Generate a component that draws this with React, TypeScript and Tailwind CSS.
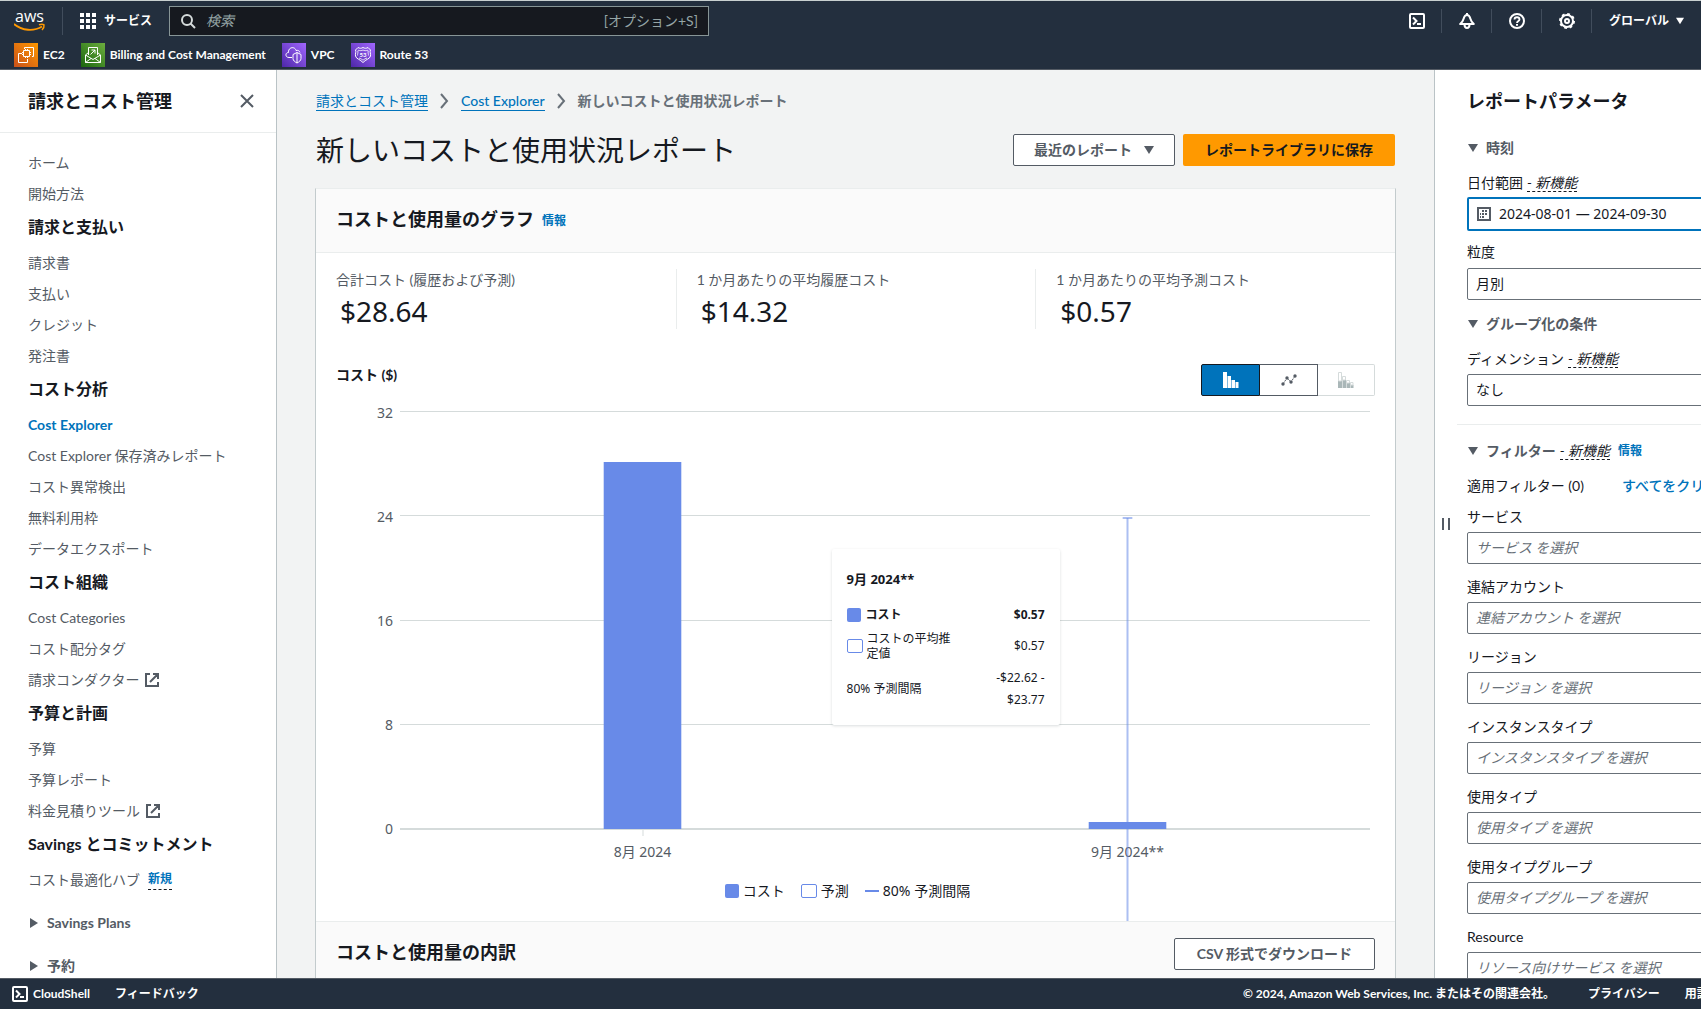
import type { ReactNode } from "react";

interface NavItem {
  label: string;
  external?: boolean;
  active?: boolean;
  isNew?: boolean;
}

interface NavSection {
  title?: string;
  items: NavItem[];
}

const navSections: NavSection[] = [
  { items: [{ label: "ホーム" }, { label: "開始方法" }] },
  {
    title: "請求と支払い",
    items: [{ label: "請求書" }, { label: "支払い" }, { label: "クレジット" }, { label: "発注書" }],
  },
  {
    title: "コスト分析",
    items: [
      { label: "Cost Explorer", active: true },
      { label: "Cost Explorer 保存済みレポート" },
      { label: "コスト異常検出" },
      { label: "無料利用枠" },
      { label: "データエクスポート" },
    ],
  },
  {
    title: "コスト組織",
    items: [
      { label: "Cost Categories" },
      { label: "コスト配分タグ" },
      { label: "請求コンダクター", external: true },
    ],
  },
  {
    title: "予算と計画",
    items: [
      { label: "予算" },
      { label: "予算レポート" },
      { label: "料金見積りツール", external: true },
    ],
  },
  { title: "Savings とコミットメント", items: [{ label: "コスト最適化ハブ", isNew: true }] },
];

const stats = [
  { label: "合計コスト (履歴および予測)", value: "$28.64" },
  { label: "1 か月あたりの平均履歴コスト", value: "$14.32" },
  { label: "1 か月あたりの平均予測コスト", value: "$0.57" },
];

const filters = [
  { id: "service", label: "サービス", placeholder: "サービス を選択" },
  { id: "account", label: "連結アカウント", placeholder: "連結アカウント を選択" },
  { id: "region", label: "リージョン", placeholder: "リージョン を選択" },
  { id: "instance", label: "インスタンスタイプ", placeholder: "インスタンスタイプ を選択" },
  { id: "usage", label: "使用タイプ", placeholder: "使用タイプ を選択" },
  { id: "usage-group", label: "使用タイプグループ", placeholder: "使用タイプグループ を選択" },
  { id: "resource", label: "Resource", placeholder: "リソース向けサービス を選択" },
];

/* ---------- icons ---------- */

const AwsLogo = () => (
  <svg width="32" height="28" viewBox="0 -5 32 28" aria-label="AWS">
    <text x="1" y="10" fontSize="16" fill="#fff" fontFamily="Open Sans, sans-serif">
      aws
    </text>
    <path d="M0 12c8 7 20 7.500 28 2.500" fill="none" stroke="#f90" strokeWidth="1.800" />
    <path d="M25 12.800c2-.8 4-.8 5 0 .3 1.800-.5 3.800-2 5.200" fill="none" stroke="#f90" strokeWidth="1.500" />
  </svg>
);

const GridIcon = () => (
  <svg width="16" height="16" viewBox="0 0 16 16" fill="#fff">
    {[0, 6, 12].map((y) =>
      [0, 6, 12].map((x) => <rect key={`${x}-${y}`} x={x} y={y} width="4" height="4" />)
    )}
  </svg>
);

const SearchIcon = () => (
  <svg width="16" height="16" viewBox="0 0 16 16" fill="none" stroke="#d5dbdb" strokeWidth="2">
    <circle cx="7" cy="7" r="5" />
    <path d="M10.500 10.500 15 15" />
  </svg>
);

const ShellIcon = () => (
  <svg width="16" height="16" viewBox="0 0 16 16" fill="none" stroke="#fff" strokeWidth="2">
    <rect x="1" y="1" width="14" height="14" rx="1" />
    <path d="m4 4.500 3.500 3.500L4 11.500" />
    <path d="M8 11h4" />
  </svg>
);

const BellIcon = () => (
  <svg width="16" height="16" viewBox="0 0 16 16" fill="none" stroke="#fff" strokeWidth="2" strokeLinejoin="round">
    <path d="M8 2C5.500 2 5 4 4.500 6 4 8 3 9.500 1.200 11h13.600C13 9.500 12 8 11.500 6 11 4 10.500 2 8 2z" />
    <path d="M8 0v2M5.500 11.500c0 4.600 5 4.600 5 0" />
  </svg>
);

const HelpIcon = () => (
  <svg width="16" height="16" viewBox="0 0 16 16" fill="none" stroke="#fff" strokeWidth="2">
    <circle cx="8" cy="8" r="7" />
    <path d="M5.500 6.500c0-3 5-3 5 0C10.500 8 8 8 8 10" strokeWidth="1.800" />
    <path d="M8 11v1.800" />
  </svg>
);

const GearIcon = () => (
  <svg width="16" height="16" viewBox="0 0 16 16" fill="none" stroke="#fff">
    <circle cx="8" cy="8" r="6" strokeWidth="2" />
    <circle cx="8" cy="8" r="7" strokeWidth="2" strokeDasharray="2.750 2.750" />
    <circle cx="8" cy="8" r="2" strokeWidth="2" />
  </svg>
);

const ExternalIcon = () => (
  <svg width="14" height="14" viewBox="0 0 14 14" fill="none" stroke="#545b64" strokeWidth="2">
    <path d="M5 1H1v12h12V9M8 1h5v5M13 1 5 9" />
  </svg>
);

const CalendarIcon = () => (
  <svg width="14" height="14" viewBox="0 0 14 14" fill="#545b64">
    <path d="M0 0h14v14H0zM2 2v10h10V2z" fillRule="evenodd" />
    <path d="M5 3h2v2H5zM8 3h2v2H8zM3 6h1v2H3zM5 6h2v2H5zM8 6h2v2H8zM3 9h1v2H3zM5 9h2v2H5z" />
  </svg>
);

const CaretDown = ({ size = 10 }: { size?: number }) => (
  <svg width={size} height={size} viewBox="0 0 10 10" fill="currentColor">
    <path d="M0 1h10L5 9z" />
  </svg>
);

const CaretRight = () => (
  <svg width="8" height="10" viewBox="0 0 8 10" fill="currentColor">
    <path d="M0 0v10l8-5z" />
  </svg>
);

const Chevron = () => (
  <svg width="9" height="16" viewBox="0 0 9 16" fill="none" stroke="#687078" strokeWidth="2">
    <path d="m1 1 6 7-6 7" />
  </svg>
);

const Ec2Icon = () => (
  <svg width="24" height="24" viewBox="0 0 24 24" fill="none" stroke="#fff">
    <defs>
      <linearGradient id="ec2" x1="0" y1="1" x2="1" y2="0">
        <stop stopColor="#c8511b" />
        <stop offset="1" stopColor="#f90" />
      </linearGradient>
    </defs>
    <rect width="24" height="24" fill="url(#ec2)" stroke="none" />
    <path d="M9.500 7.500h6v6h-6zM11.500 7.500V6M13.500 7.500V6M11.500 15v-1.500M13.500 15v-1.500M9.500 9.500H8M9.500 11.500H8M17 9.500h-1.500M17 11.500h-1.500" />
    <path d="M10.500 6V4.500h9v9H18M8 10.500H4.500v9h9V16" />
  </svg>
);

const BillingIcon = () => (
  <svg width="24" height="24" viewBox="0 0 24 24" fill="none" stroke="#fff">
    <defs>
      <linearGradient id="billing" x1="0" y1="1" x2="1" y2="0">
        <stop stopColor="#1b660f" />
        <stop offset="1" stopColor="#6cae3e" />
      </linearGradient>
    </defs>
    <rect width="24" height="24" fill="url(#billing)" stroke="none" />
    <path d="M7.500 12V4.500h9V12M7.500 9.500l-3 2.500v7.500h15V12l-3-2.500M4.500 12l7.500 4.500 7.500-4.500M4.500 19.500 10 15.500M19.500 19.500 14 15.500M9.500 11.500l4.500-4.500M10.500 7h3.500v3.500" />
  </svg>
);

const VpcIcon = () => (
  <svg width="24" height="24" viewBox="0 0 24 24" fill="none" stroke="#fff">
    <defs>
      <linearGradient id="vpc" x1="0" y1="1" x2="1" y2="0">
        <stop stopColor="#4d27a8" />
        <stop offset="1" stopColor="#a166ff" />
      </linearGradient>
    </defs>
    <rect width="24" height="24" fill="url(#vpc)" stroke="none" />
    <path d="M10 14.500H7c-4 0-4-5-.5-5C6 4 13 3 14 7.500c2-.5 3.500.3 4 2" />
    <path d="m15 9.500 4 2v4c0 2-2 3.500-4 4.500-2-1-4-2.500-4-4.500v-4zM15 9.500V20" />
  </svg>
);

const Route53Icon = () => (
  <svg width="24" height="24" viewBox="0 0 24 24" fill="none" stroke="#fff">
    <rect width="24" height="24" fill="url(#vpc)" stroke="none" />
    <path d="M12 4.500c-1.500 1-3.500 1-5 0L4.500 7c1 2-.5 3.500 0 6 .6 3 5 3.500 7.500 6.500 2.500-3 6.900-3.500 7.500-6.500.5-2.500-1-4 0-6L17 4.500c-1.500 1-3.500 1-5 0z" />
    <path d="M12 7c-1.500.8-3 .8-4.500.2L6.800 8c.5 1.800-.5 3-.2 4.500M12 7c1.500.8 3 .8 4.500.2l.7.8c-.5 1.800.5 3 .2 4.500M8 15c1.500.5 3 1.200 4 2.200 1-1 2.500-1.700 4-2.200" strokeWidth="0.800" />
    <text x="12" y="14" fontSize="6" textAnchor="middle" fill="#fff" stroke="none">
      53
    </text>
  </svg>
);

/* ---------- header ---------- */

const favorites = [
  { label: "EC2", icon: <Ec2Icon /> },
  { label: "Billing and Cost Management", icon: <BillingIcon /> },
  { label: "VPC", icon: <VpcIcon /> },
  { label: "Route 53", icon: <Route53Icon /> },
];

const IconButton = ({ label, children }: { label: string; children: ReactNode }) => (
  <button className="flex h-6 w-[50px] items-center justify-center border-r border-[#414d5c]" aria-label={label}>
    {children}
  </button>
);

const Header = () => (
  <header className="h-[70px] shrink-0 overflow-hidden border-t border-b border-t-[#c8d0d0] border-b-[#545b64] bg-[#232f3e] text-white">
    <div className="flex h-10 items-center pl-3.5">
      <a href="#" className="flex w-[49px] shrink-0 border-r border-[#414d5c]">
        <AwsLogo />
      </a>
      <button className="ml-[17px] flex shrink-0 items-center gap-2 text-xs font-bold">
        <GridIcon />
        サービス
      </button>
      <label className="ml-[17px] flex h-[30px] w-[540px] items-center border border-[#879596] bg-[#16191f] px-2.5">
        <SearchIcon />
        <input
          type="search"
          aria-label="検索"
          placeholder="検索"
          className="ml-2.5 min-w-0 flex-1 bg-transparent text-sm outline-none placeholder:text-[#95a5a6] placeholder:italic"
        />
        <span className="text-sm text-[#95a5a6]">[オプション+S]</span>
      </label>
      <div className="ml-auto flex w-[309px] shrink-0 items-center">
        <IconButton label="CloudShell"><ShellIcon /></IconButton>
        <IconButton label="通知"><BellIcon /></IconButton>
        <IconButton label="ヘルプ"><HelpIcon /></IconButton>
        <IconButton label="設定"><GearIcon /></IconButton>
        <button className="ml-[17px] flex items-center gap-[7px] text-xs font-bold">
          グローバル
          <CaretDown size={8} />
        </button>
      </div>
    </div>
    <nav className="flex items-center gap-4 pt-0.5 pl-3.5">
      {favorites.map((f) => (
        <a key={f.label} href="#" className="flex items-center gap-[5px] text-xs leading-6 font-bold">
          {f.icon}
          {f.label}
        </a>
      ))}
    </nav>
  </header>
);

/* ---------- side navigation ---------- */

const SideNav = () => (
  <aside className="w-[277px] shrink-0 overflow-hidden border-r border-[#bac3c6] bg-white">
    <div className="flex h-[63px] items-center justify-between border-b border-[#eaeded] pr-[22px] pl-7">
      <h2 className="text-lg font-bold">請求とコスト管理</h2>
      <button aria-label="閉じる">
        <svg width="14" height="14" viewBox="0 0 14 14" stroke="#545b64" strokeWidth="2">
          <path d="m1 1 12 12M13 1 1 13" />
        </svg>
      </button>
    </div>
    <nav className="pt-[14px] pl-7 text-sm text-[#545b64]">
      {navSections.map((section, i) => (
        <div key={i}>
          {section.title && (
            <h3 className="flex h-[38px] items-center pb-0.5 text-base font-bold text-[#16191f]">{section.title}</h3>
          )}
          <ul>
            {section.items.map((item) => (
              <li key={item.label} className="flex h-[31px] items-center">
                <a
                  href="#"
                  className={item.active ? "font-bold text-[#0073bb]" : "flex items-center gap-1.5"}
                >
                  {item.label}
                  {item.external && <ExternalIcon />}
                </a>
                {item.isNew && (
                  <span className="ml-2 border-b border-dashed border-[#16191f] text-xs leading-5 font-bold text-[#0073bb]">
                    新規
                  </span>
                )}
              </li>
            ))}
          </ul>
        </div>
      ))}
      {["Savings Plans", "予約"].map((label) => (
        <button key={label} className="mt-3 flex h-[31px] items-center gap-[9px] pl-0.5 font-bold">
          <CaretRight />
          {label}
        </button>
      ))}
    </nav>
  </aside>
);

/* ---------- chart ---------- */

const Tooltip = () => (
  <div className="absolute top-[138px] right-[32%] w-[228px] rounded-xs bg-white px-[15px] pt-5 pb-3.5 text-xs text-[#16191f] shadow-[0_1px_3px_rgba(0,28,36,0.15)]">
    <h4 className="mb-4 text-[13px] leading-5 font-bold">9月 2024**</h4>
    <div className="flex h-5 items-center font-bold">
      <span className="mr-[5px] size-3.5 rounded-xs bg-[#688ae8]" />
      コスト
      <span className="ml-auto">$0.57</span>
    </div>
    <div className="flex h-[42px] items-center">
      <span className="mr-1 h-3.5 w-4 rounded-xs border border-[#688ae8]" />
      <span className="w-[86px] leading-[15px]">コストの平均推定値</span>
      <span className="ml-auto">$0.57</span>
    </div>
    <div className="flex items-center justify-between">
      <span>80% 予測間隔</span>
      <span className="w-[60px] text-right leading-[22px]">-$22.62 - $23.77</span>
    </div>
  </div>
);

const Chart = () => (
  <div className="mr-[25px] ml-5 flex pt-[15px] font-['Noto_Sans','Noto_Sans_CJK_JP',sans-serif] text-sm text-[#545b64]">
    <div className="-mt-2 flex h-[436px] w-[57px] flex-col justify-between text-right leading-5">
      {[32, 24, 16, 8, 0].map((v) => (
        <span key={v}>{v}</span>
      ))}
    </div>
    <div className="relative ml-[7px] flex-1">
      <svg width="100%" height="450" className="block overflow-visible">
        {[0, 104, 209, 313].map((y) => (
          <rect key={y} x="0" y={y} width="100%" height="1" fill="#d5dbdb" />
        ))}
        <rect x="0" y="417" width="100%" height="2" fill="#d5dbdb" />
        <rect x="25%" y="419" width="1" height="6" fill="#d5dbdb" />
        <rect x="21%" y="51" width="8%" height="367" fill="#688ae8" />
        <text x="25%" y="446" textAnchor="middle" fill="#545b64">
          8月 2024
        </text>
        <text x="75%" y="446" textAnchor="middle" fill="#545b64">
          9月 2024**
        </text>
        <line x1="75%" x2="75%" y1="107" y2="511" stroke="#688ae8" strokeOpacity="0.55" strokeWidth="2" />
        <rect x="74.500%" y="106" width="1%" height="2" fill="#688ae8" fillOpacity="0.55" />
        <rect x="71%" y="411" width="8%" height="7" fill="#688ae8" />
      </svg>
      <Tooltip />
    </div>
  </div>
);

const Legend = () => (
  <div className="flex h-[60px] items-center justify-center gap-4 pr-4 font-['Noto_Sans','Noto_Sans_CJK_JP',sans-serif] text-sm">
    <span className="flex items-center gap-1">
      <i className="size-3.5 rounded-xs bg-[#688ae8]" />
      コスト
    </span>
    <span className="flex items-center gap-1">
      <i className="h-3.5 w-4 rounded-xs border border-[#688ae8]" />
      予測
    </span>
    <span className="flex items-center gap-1">
      <i className="h-0.5 w-3.5 bg-[#688ae8]" />
      80% 予測間隔
    </span>
  </div>
);

const ChartTypeToggle = () => (
  <div className="flex h-8">
    <button aria-label="棒グラフ" className="flex w-[59px] items-center justify-center rounded-l-xs border border-[#16191f] bg-[#0073bb]">
      <svg width="16" height="16" viewBox="0 0 16 16" fill="#fff">
        <path d="M0 0h4v16H0zM4.500 4H8v12H4.500zM8.500 8H12v8H8.500zM12.500 10h3v6h-3z" />
      </svg>
    </button>
    <button aria-label="折れ線グラフ" className="flex w-[58px] items-center justify-center border border-l-0 border-[#545b64]">
      <svg width="16" height="16" viewBox="0 0 16 16" fill="#545b64">
        <path d="m2 12 4-6 4 4 4-6" fill="none" stroke="#545b64" strokeDasharray="2 1" />
        <circle cx="2" cy="12" r="1.700" />
        <circle cx="6" cy="6" r="1.700" />
        <circle cx="10" cy="10" r="1.700" />
        <circle cx="14" cy="4" r="1.700" />
      </svg>
    </button>
    <button disabled aria-label="積み上げ棒グラフ" className="flex w-[57px] items-center justify-center rounded-r-xs border border-l-0 border-[#d5dbdb]">
      <svg width="16" height="16" viewBox="0 0 16 16" fill="#aab7b8">
        <path d="M0 9h4v7H0zM4.500 8H8v8H4.500zM8.500 11H12v5H8.500zM12.500 13h3v3h-3z" />
        <path d="M.5.500h3V9h-3zM4.500 4.500h3V8h-3zM8.500 8.500h3V11h-3zM12.500 10.500h2.500V13h-2.500z" fill="none" stroke="#d5dbdb" />
      </svg>
    </button>
  </div>
);

/* ---------- main ---------- */

const Main = () => (
  <main className="min-w-0 flex-1 overflow-hidden bg-[#f2f3f3] px-[39px]">
    <nav aria-label="パンくず" className="mt-5 flex items-center gap-3 text-sm leading-[22px] text-[#687078]">
      <a href="#" className="border-b border-[#0073bb] leading-[18px] text-[#0073bb]">
        請求とコスト管理
      </a>
      <Chevron />
      <a href="#" className="border-b border-[#0073bb] leading-[18px] font-medium text-[#0073bb]">
        Cost Explorer
      </a>
      <Chevron />
      <span className="font-bold">新しいコストと使用状況レポート</span>
    </nav>

    <div className="mt-[22px] flex h-8 items-center gap-2">
      <h1 className="mr-auto text-[28px] leading-8">新しいコストと使用状況レポート</h1>
      <button className="flex h-8 items-center gap-3 rounded-xs border border-[#545b64] bg-white px-5 text-sm font-bold text-[#545b64]">
        最近のレポート
        <CaretDown />
      </button>
      <button className="h-8 rounded-xs bg-[#f90] px-[22px] text-sm font-bold">レポートライブラリに保存</button>
    </div>

    <section className="-mx-px mt-[22px] border border-t-[#eaeded] border-r-[#c3cbcd] border-b-0 border-l-[#c3cbcd] bg-white">
      <div className="flex h-16 items-center gap-2 border-b border-[#eaeded] bg-[#fafafa] px-5 pb-1">
        <h2 className="text-lg leading-6 font-bold">コストと使用量のグラフ</h2>
        <a href="#" className="pt-1 text-xs font-bold text-[#0073bb]">
          情報
        </a>
      </div>

      <dl className="grid grid-cols-3 pt-4">
        {stats.map((s) => (
          <div key={s.label} className="h-[60px] border-[#eaeded] px-5 not-first:border-l">
            <dt className="text-sm leading-[22px] text-[#545b64]">{s.label}</dt>
            <dd className="pl-1 font-['Noto_Sans',sans-serif] text-[28px] leading-10">{s.value}</dd>
          </div>
        ))}
      </dl>

      <div className="mt-[35px] flex justify-between px-5">
        <h3 className="text-sm leading-[22px] font-bold">コスト ($)</h3>
        <ChartTypeToggle />
      </div>
      <Chart />
      <Legend />

      <div className="relative flex h-16 items-center justify-between border-t border-[#eaeded] bg-[#fafafa] px-5">
        <h2 className="pb-1 text-lg leading-6 font-bold">コストと使用量の内訳</h2>
        <button className="h-8 rounded-xs border border-[#545b64] bg-white px-[22px] text-sm font-bold text-[#545b64]">
          CSV 形式でダウンロード
        </button>
      </div>
    </section>
  </main>
);

/* ---------- parameters ---------- */

const NewBadge = () => (
  <em className="border-b border-dashed border-[#16191f] text-sm leading-[17px] font-normal text-[#16191f]">- 新機能</em>
);

const SelectButton = ({ id, children }: { id: string; children: ReactNode }) => (
  <button id={id} className="flex h-8 w-full items-center rounded-xs border border-[#687078] px-2 text-sm">
    {children}
  </button>
);

const Parameters = () => (
  <aside className="flex w-[267px] shrink-0 overflow-hidden border-l border-[#bac3c6] bg-white text-sm">
    <button aria-label="パネルのサイズ変更" className="flex w-[22px] shrink-0 items-center justify-center gap-1">
      <i className="h-3 w-0.5 bg-[#545b64]" />
      <i className="h-3 w-0.5 bg-[#545b64]" />
    </button>
    <div className="w-[290px] shrink-0">
      <div className="pl-2.5">
        <h2 className="mt-[18px] text-lg leading-[26px] font-bold">レポートパラメータ</h2>
        <h3 className="mt-6 flex items-center gap-2 pl-px leading-5 font-bold text-[#545b64]">
          <CaretDown />
          時刻
        </h3>
        <label htmlFor="range" className="mt-[15px] flex h-5 items-center gap-1">
          日付範囲 <NewBadge />
        </label>
        <button
          id="range"
          className="mt-1 flex h-[34px] w-full items-center gap-2 rounded-xs border-2 border-[#0073bb] px-2 font-['Noto_Sans',sans-serif]"
        >
          <CalendarIcon />
          2024-08-01 — 2024-09-30
        </button>
        <label htmlFor="granularity" className="mt-[11px] block leading-5">
          粒度
        </label>
        <div className="mt-[6px]">
          <SelectButton id="granularity">月別</SelectButton>
        </div>
        <h3 className="mt-3.5 flex items-center gap-2 pl-px leading-5 font-bold text-[#545b64]">
          <CaretDown />
          グループ化の条件
        </h3>
        <label htmlFor="dimension" className="mt-[15px] flex h-5 items-center gap-1">
          ディメンション <NewBadge />
        </label>
        <div className="mt-[5px]">
          <SelectButton id="dimension">なし</SelectButton>
        </div>
      </div>

      <div className="mt-[18px] border-t border-[#eaeded] pt-4 pl-2.5">
        <h3 className="flex items-center pl-px leading-5 font-bold text-[#545b64]">
          <CaretDown />
          <span className="mr-1 ml-2">フィルター</span>
          <NewBadge />
          <a href="#" className="ml-2 text-xs text-[#0073bb]">
            情報
          </a>
        </h3>
        <div className="mt-[15px] flex leading-5">
          <span className="w-[155px]">適用フィルター (0)</span>
          <button className="font-medium text-[#0073bb]">すべてをクリア</button>
        </div>
        {filters.map((f) => (
          <div key={f.id} className="pt-[11px]">
            <label htmlFor={f.id} className="block leading-5">
              {f.label}
            </label>
            <div className="mt-[5px] mb-[2px]">
              <SelectButton id={f.id}>
                <span className="text-[#687078] italic">{f.placeholder}</span>
              </SelectButton>
            </div>
          </div>
        ))}
      </div>
    </div>
  </aside>
);

const Footer = () => (
  <footer className="flex h-[31px] shrink-0 items-center overflow-hidden border-t border-[#545b64] bg-[#232f3e] pl-3 text-xs font-bold text-white">
    <button className="flex items-center gap-[5px]">
      <ShellIcon />
      CloudShell
    </button>
    <button className="ml-[25px]">フィードバック</button>
    <div className="ml-auto flex w-[458px] shrink-0 gap-[25px] whitespace-nowrap">
      <span className="mr-2">© 2024, Amazon Web Services, Inc. またはその関連会社。</span>
      <a href="#">プライバシー</a>
      <a href="#">用語</a>
    </div>
  </footer>
);

const App = () => (
  <div className="flex h-screen flex-col overflow-hidden font-['Lato','Noto_Sans_CJK_JP',sans-serif] text-[#16191f]">
    <Header />
    <div className="flex min-h-0 flex-1">
      <SideNav />
      <Main />
      <Parameters />
    </div>
    <Footer />
  </div>
);

export default App;
